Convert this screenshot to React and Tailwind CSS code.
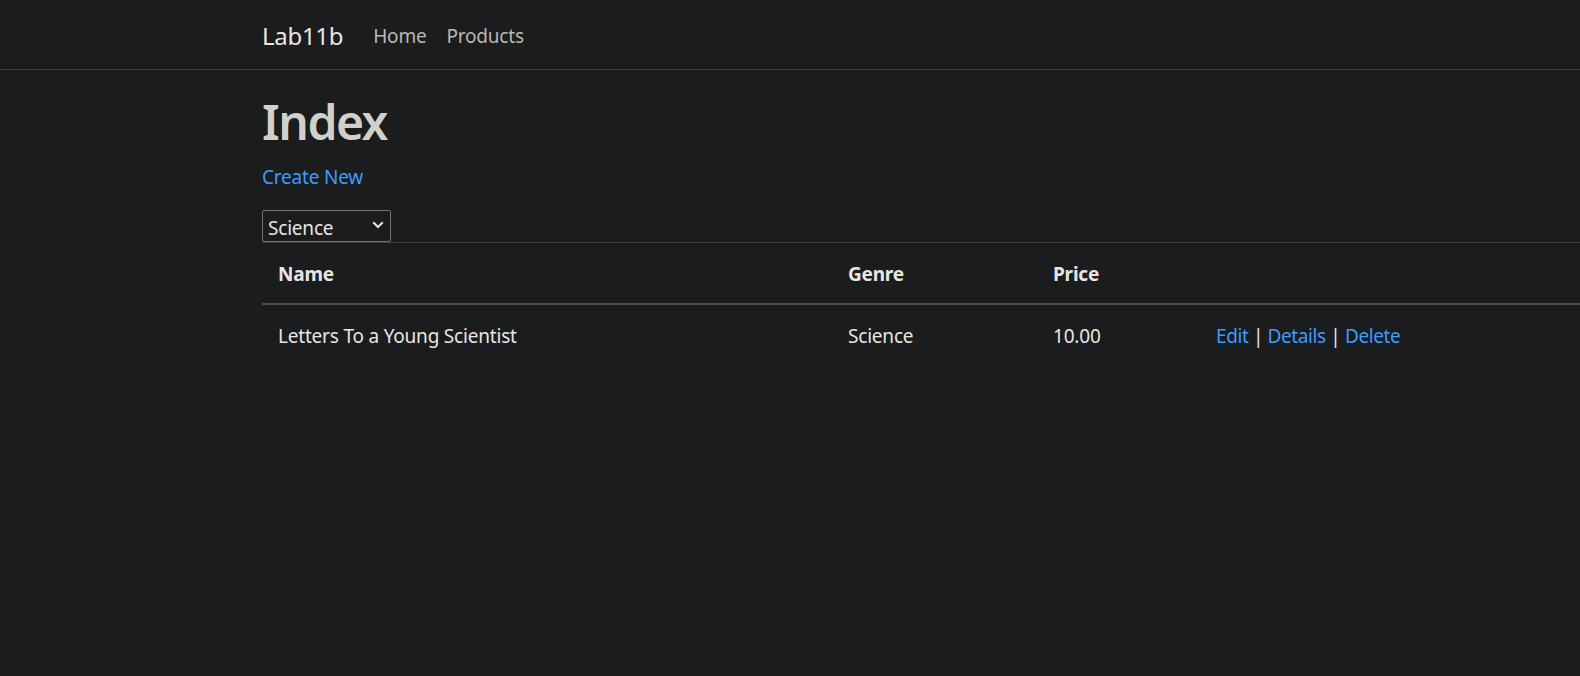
export default function App() {
  const font = { fontFamily: '"Noto Sans", "Open Sans", sans-serif' };
  return (
    <div className="min-h-[676px] w-full bg-[#1b1c1e] text-[#e8e6e3] overflow-hidden" style={font}>
      <nav className="h-[70px] border-b border-[#3a3e41] flex items-center">
        <div className="ml-[262px] flex items-center mt-[3px]">
          <span className="text-[24px] tracking-[-0.3px] text-[#e8e6e3] mr-[30px]">Lab11b</span>
          <span className="text-[19px] tracking-[-0.2px] text-[#bdb7ae] mr-[20px]">Home</span>
          <span className="text-[19px] tracking-[-0.2px] text-[#bdb7ae]">Products</span>
        </div>
      </nav>
      <main className="ml-[262px]">
        <h1 className="text-[48px] font-semibold tracking-[-1.5px] text-[#d3cfc9] leading-[1.2] mt-[23px] mb-[11px]">Index</h1>
        <p className="text-[19px] tracking-[-0.2px] leading-[30px] mb-[18px]">
          <a className="text-[#3d9bff]">Create New</a>
        </p>
        <div className="w-[129px] h-[32px] border border-[#77716a] rounded-[2px] flex items-center justify-between pl-[5px] pr-[6px] pt-[5px] text-[19px] tracking-[-0.2px] text-[#e8e6e3]">
          <span>Science</span>
          <svg width="12" height="8" viewBox="0 0 12 8" fill="none" className="-mt-[6px]">
            <path d="M1.2 1.2 L6 6 L10.8 1.2" stroke="#e8e6e3" strokeWidth="2" />
          </svg>
        </div>
        <table className="w-[1320px] border-collapse text-[19px] tracking-[-0.2px]">
          <thead>
            <tr className="border-t border-[#3a3e41] border-b-2 border-b-[#4a4f52]">
              <th className="w-[570px] text-left font-bold px-4 pt-[3px] h-[62px] text-[#e8e6e3]">Name</th>
              <th className="w-[205px] text-left font-bold px-4 pt-[3px] text-[#e8e6e3]">Genre</th>
              <th className="w-[163px] text-left font-bold px-4 pt-[3px] text-[#e8e6e3]">Price</th>
              <th className="px-4"></th>
            </tr>
          </thead>
          <tbody>
            <tr>
              <td className="px-4 h-[63px]">Letters To a Young Scientist</td>
              <td className="px-4">Science</td>
              <td className="px-4">10.00</td>
              <td className="px-4 tracking-[-0.4px]">
                <a className="text-[#3d9bff]">Edit</a> | <a className="text-[#3d9bff]">Details</a> | <a className="text-[#3d9bff]">Delete</a>
              </td>
            </tr>
          </tbody>
        </table>
      </main>
    </div>
  );
}
